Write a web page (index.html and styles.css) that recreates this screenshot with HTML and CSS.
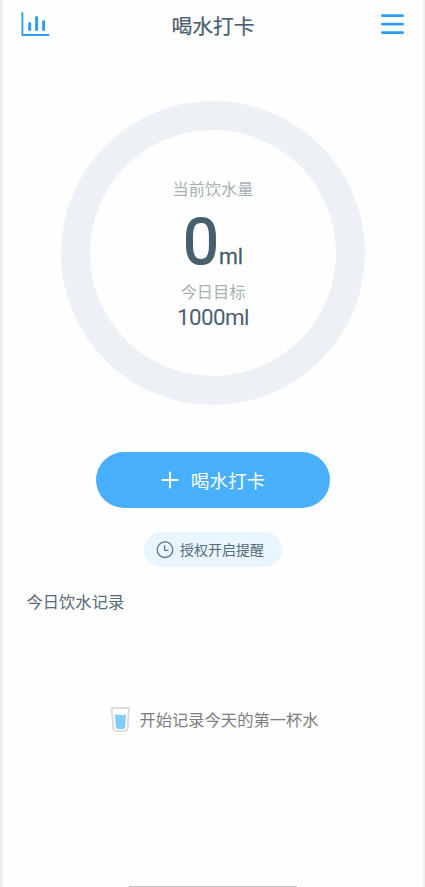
FILE: index.html
```
<!DOCTYPE html>
<html lang="zh-CN">
<head>
<meta charset="UTF-8">
<meta name="viewport" content="width=device-width, initial-scale=1">
<title>喝水打卡</title>
<link rel="stylesheet" href="styles.css">
</head>
<body>
<main class="app">
  <header class="topbar">
    <svg class="icon-chart" width="30" height="26" viewBox="0 0 30 26" fill="none" stroke="#2f9df4" stroke-linecap="round">
      <path d="M1.4 1.9V24H27.6" stroke-width="1.9" stroke-linejoin="round"/>
      <path d="M8.7 12.4V18.6M15.6 6.6V18.6M22.6 10.6V18.6" stroke-width="3"/>
    </svg>
    <h1 class="title">喝水打卡</h1>
    <svg class="icon-menu" width="26" height="22" viewBox="0 0 26 22" fill="none" stroke="#2f9df4" stroke-width="2.8" stroke-linecap="round">
      <path d="M2.4 2.7H22.6M2.4 11.2H22.6M2.4 19.6H22.6"/>
    </svg>
  </header>
  <section class="ring">
    <p class="label">当前饮水量</p>
    <p class="amount"><span class="value">0</span><span class="unit">ml</span></p>
    <p class="label goal-label">今日目标</p>
    <p class="goal">1000ml</p>
  </section>
  <button class="punch">
    <svg width="18" height="18" viewBox="0 0 18 18" fill="none" stroke="#fff" stroke-width="2" stroke-linecap="round"><path d="M9 1.4V16.6M1.4 9H16.6"/></svg>
    <span>喝水打卡</span>
  </button>
  <button class="remind">
    <svg width="18" height="18" viewBox="0 0 18 18" fill="none" stroke="#5f7683" stroke-width="1.3" stroke-linecap="round" stroke-linejoin="round"><circle cx="9" cy="8.7" r="7.8"/><path d="M8.6 4.6V9.3H12"/></svg>
    <span>授权开启提醒</span>
  </button>
  <h2 class="records-title">今日饮水记录</h2>
  <div class="empty">
    <svg width="22" height="28" viewBox="0 0 22 28">
      <path d="M1.6 2H19L17.5 23.2Q17.3 25.3 10.3 25.3Q3.7 25.3 3.5 23.2Z" fill="#fff" stroke="#dcdcdc" stroke-width="2" stroke-linejoin="round"/>
      <path d="M4.8 8.2Q8 8.7 10.3 9.1T16 8.8L15.1 21.8Q15 23 10.5 23Q6.2 23 6 21.8Z" fill="#7fccfe"/>
    </svg>
    <span>开始记录今天的第一杯水</span>
  </div>
  <div class="home-bar"></div>
</main>
</body>
</html>
```
FILE: styles.css
```
* { box-sizing: border-box; margin: 0; padding: 0; }

body {
  background: #efefef;
  font-family: "Noto Sans CJK SC", sans-serif;
  color: #4a6070;
}

.app {
  display: flex;
  flex-direction: column;
  align-items: center;
  width: 420px;
  height: 887px;
  margin-left: 3px;
  background: #fefefe;
}

.topbar {
  display: flex;
  align-items: center;
  justify-content: space-between;
  width: 100%;
  height: 50px;
  padding: 0 17px 2px 18px;
}

.title {
  margin-right: 5px;
  padding-top: 2px;
  font-size: 20.8px;
  font-weight: 400;
  line-height: 30px;
  -webkit-text-stroke: 0.2px currentColor;
}

.ring {
  display: flex;
  flex-direction: column;
  align-items: center;
  flex: none;
  width: 304px;
  height: 304px;
  margin-top: 51px;
  padding-top: 46px;
  border: 29px solid #edf1f6;
  border-radius: 50%;
}

.label {
  font-size: 16.2px;
  line-height: 24px;
  color: #a6b1b3;
}

.amount {
  display: flex;
  align-items: baseline;
  height: 79px;
  padding-top: 3px;
  font-family: Roboto, sans-serif;
  line-height: 79px;
  color: #485f6e;
}

.value {
  font-size: 64px;
  -webkit-text-stroke: 1.2px currentColor;
}

.unit {
  font-size: 21.5px;
  -webkit-text-stroke: 0.3px currentColor;
}

.goal {
  font-family: Roboto, sans-serif;
  font-size: 22.3px;
  line-height: 28px;
  letter-spacing: -0.5px;
}

.punch,
.remind {
  display: flex;
  align-items: center;
  flex: none;
  border: 0;
  font-family: inherit;
}

.punch span,
.remind span {
  padding-bottom: 2px;
}

.punch {
  justify-content: center;
  gap: 12px;
  width: 234px;
  height: 56px;
  margin-top: 47px;
  border-radius: 28px;
  background: #47affc;
  color: #fff;
  font-size: 18.6px;
}

.remind {
  gap: 6px;
  width: 138px;
  height: 35px;
  margin-top: 24px;
  padding-left: 12px;
  border-radius: 18px;
  background: #eaf6ff;
  color: #536b78;
  font-size: 14px;
}

.records-title {
  align-self: flex-start;
  margin: 22px 0 0 23.5px;
  font-size: 16.3px;
  font-weight: 400;
  line-height: 24px;
  color: #536b78;
}

.empty {
  display: flex;
  align-items: center;
  gap: 7px;
  margin: 92px 0 0 3px;
  font-size: 16.3px;
  line-height: 28px;
  color: #7d7d7d;
}

.empty span {
  padding-bottom: 1px;
}

.home-bar {
  width: 168px;
  height: 1px;
  margin-top: auto;
  background: #c4c4c4;
}
```
